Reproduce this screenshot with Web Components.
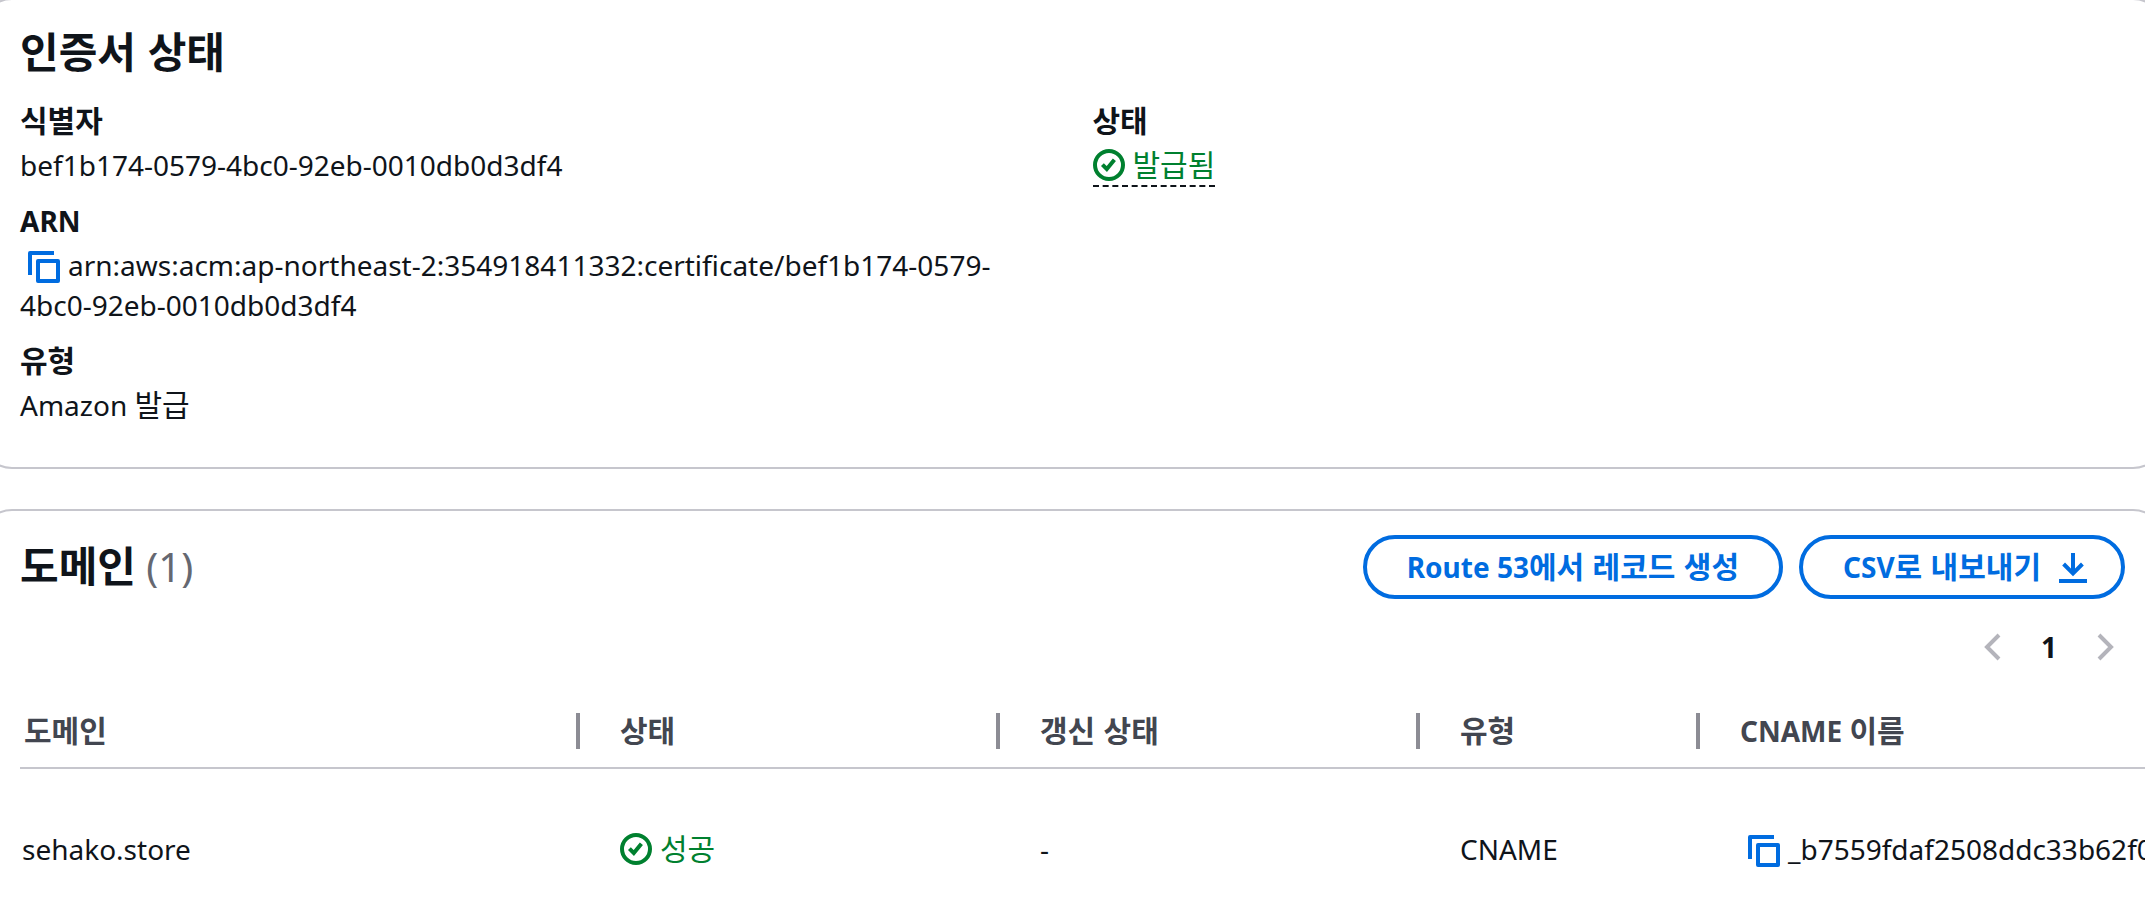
<!DOCTYPE html>
<html lang="ko">
<head>
<meta charset="utf-8">
<title>인증서 상태</title>
<style>
  html { overflow-x: hidden; }
  body {
    margin: 0;
    background: #fff;
    color: #0f141a;
    font: 28px/40px "Noto Sans", "Noto Sans CJK KR", sans-serif;
  }
</style>
</head>
<body>
<certificate-page></certificate-page>

<template id="t-icon">
  <style>
    :host { display: inline-block; width: 32px; height: 32px; flex: none; }
    svg { display: block; width: 100%; height: 100%; fill: none; stroke: currentColor; stroke-width: 2; overflow: visible; }
  </style>
</template>

<template id="t-ko"><style>:host { font-size: var(--ko-size, 30px); font-family: "Noto Sans CJK KR", sans-serif; line-height: 1; }</style><slot></slot></template>

<template id="t-card">
  <style>
    :host { display: block; box-sizing: border-box; margin: 0 -20px; border: 2px solid #c6c6cd; border-radius: 32px; background: #fff; padding: 24px 38px 42px; }
  </style>
  <slot></slot>
</template>

<template id="t-title">
  <style>
    :host { display: block; --ko-size: 42px; }
    h2 { margin: 0; font-size: 40px; line-height: 48px; font-weight: 700; }
    ::slotted(span) { font-weight: 400; color: #656871; }
  </style>
  <h2><slot></slot></h2>
</template>

<template id="t-field">
  <style>
    :host { display: flex; flex-direction: column; gap: 4px; }
    .label { font-weight: 700; height: 40px; }
    .value { min-height: 40px; }
  </style>
  <div class="label"><slot name="label"></slot></div>
  <div class="value"><slot></slot></div>
</template>

<template id="t-copy"><style>
    :host { display: inline; }
    button { display: inline-block; vertical-align: -7px; width: 32px; height: 32px; margin: 0 8px; padding: 0; border: 0; background: none; color: #006ce0; cursor: pointer; }
    ui-icon { display: block; }
  </style><button type="button" aria-label="복사"><ui-icon name="copy"></ui-icon></button></template>

<template id="t-status">
  <style>
    :host { display: inline-flex; align-items: center; gap: 8px; height: 40px; color: #00802f; vertical-align: top; }
    :host([popover-trigger]) { border-bottom: 2px dashed #0f141a; }
    ::slotted(*) { margin-bottom: 4px; }
  </style>
  <ui-icon name="success"></ui-icon><slot></slot>
</template>

<template id="t-button">
  <style>
    :host { display: block; }
    button { display: flex; align-items: center; gap: 16px; height: 64px; padding: 0 40px; border: 4px solid #006ce0; border-radius: 32px; background: #fff; color: #006ce0; font: inherit; font-weight: 700; white-space: nowrap; cursor: pointer; }
    :host([with-icon]) button { padding-right: 32px; }
  </style>
  <button type="button"><span><slot></slot></span><slot name="icon"></slot></button>
</template>

<template id="t-pagination">
  <style>
    :host { display: block; }
    nav { display: flex; justify-content: flex-end; align-items: center; padding-right: 4px; height: 40px; }
    button { width: 32px; height: 32px; padding: 0; border: 0; background: none; color: #b4b4bb; font: inherit; }
    button.page { width: 80px; height: 40px; color: #0f141a; font-weight: 700; }
    ui-icon { display: block; }
  </style>
  <nav aria-label="페이지">
    <button type="button" disabled aria-label="이전"><ui-icon name="left"></ui-icon></button>
    <button type="button" class="page" aria-current="page">1</button>
    <button type="button" disabled aria-label="다음"><ui-icon name="right"></ui-icon></button>
  </nav>
</template>

<template id="t-table">
  <style>
    :host { display: block; margin-right: -40px; overflow-x: auto; scrollbar-width: none; }
    table { width: 2400px; table-layout: fixed; border-collapse: separate; border-spacing: 0; }
    th, td { text-align: left; padding: 0 40px; white-space: nowrap; }
    th { height: 72px; border-bottom: 2px solid #c6c6cd; color: #424650; font-weight: 700; }
    td { height: 160px; }
    th:first-child { padding-left: 4px; }
    td:first-child { padding-left: 2px; }
    .head { display: flex; align-items: center; height: 36px; margin-right: -40px; border-right: 4px solid #8c8c94; }
    th:last-child .head { border: 0; }
    .head > div { line-height: 36px; }
  </style>
  <table>
    <colgroup><col style="width:560px"><col style="width:420px"><col style="width:420px"><col style="width:280px"><col></colgroup>
    <thead><tr>
      <th scope="col"><div class="head"><div><ko-text>도메인</ko-text></div></div></th>
      <th scope="col"><div class="head"><div><ko-text>상태</ko-text></div></div></th>
      <th scope="col"><div class="head"><div><ko-text>갱신 상태</ko-text></div></div></th>
      <th scope="col"><div class="head"><div><ko-text>유형</ko-text></div></div></th>
      <th scope="col"><div class="head"><div>CNAME <ko-text>이름</ko-text></div></div></th>
    </tr></thead>
    <tbody><tr>
      <td>sehako.store</td>
      <td><status-indicator><ko-text>성공</ko-text></status-indicator></td>
      <td>-</td>
      <td>CNAME</td>
      <td><copy-button></copy-button>_b7559fdaf2508ddc33b62f0</td>
    </tr></tbody>
  </table>
</template>

<template id="t-page">
  <style>
    :host { display: block; overflow: hidden; }
    main { display: flex; flex-direction: column; gap: 40px; margin-top: -2px; }
    .details { padding-top: 29px; }
    .columns { display: grid; grid-template-columns: 1fr 1fr; gap: 40px; margin-top: 24px; }
    .stack { display: flex; flex-direction: column; gap: 16px; min-width: 0; }
    .domains { border-bottom-width: 0; padding-bottom: 0; }
    .header { display: flex; align-items: center; justify-content: space-between; margin-bottom: 28px; }
    .actions { display: flex; gap: 16px; }
    page-controls { margin-bottom: 28px; }
  </style>
  <main>
    <ui-card class="details">
      <card-title><ko-text>인증서 상태</ko-text></card-title>
      <div class="columns">
        <div class="stack">
          <key-value><ko-text slot="label">식별자</ko-text>bef1b174-0579-4bc0-92eb-0010db0d3df4</key-value>
          <key-value><span slot="label">ARN</span><copy-button></copy-button>arn:aws:acm:ap-northeast-2:354918411332:certificate/bef1b174-0579-4bc0-92eb-0010db0d3df4</key-value>
          <key-value><ko-text slot="label">유형</ko-text>Amazon <ko-text>발급</ko-text></key-value>
        </div>
        <div class="stack">
          <key-value><ko-text slot="label">상태</ko-text><status-indicator popover-trigger><ko-text>발급됨</ko-text></status-indicator></key-value>
        </div>
      </div>
    </ui-card>
    <ui-card class="domains">
      <div class="header">
        <card-title><ko-text>도메인</ko-text> <span>(1)</span></card-title>
        <div class="actions">
          <ui-button>Route 53<ko-text>에서 레코드 생성</ko-text></ui-button>
          <ui-button with-icon>CSV<ko-text>로 내보내기</ko-text><ui-icon slot="icon" name="download"></ui-icon></ui-button>
        </div>
      </div>
      <page-controls></page-controls>
      <domain-table></domain-table>
    </ui-card>
  </main>
</template>

<script>
  const define = (name, templateId) => customElements.define(name, class extends HTMLElement {
    constructor() {
      super();
      this.attachShadow({ mode: "open" }).append(document.getElementById(templateId).content.cloneNode(true));
    }
  });

  const ICONS = {
    copy: '<g stroke-linejoin="round"><path d="M15 5H5v10h10V5Z"/><path d="M13 1H1v11"/></g>',
    success: '<circle cx="8" cy="8" r="7"/><path d="m4.7 7.8 2.2 2.2 3.8-4.6"/>',
    download: '<path d="M8 1v10M3.3 6.5 8 11.2l4.7-4.7M1 15h14"/>',
    left: '<path d="M11 2 5 8l6 6"/>',
    right: '<path d="m5 2 6 6-6 6"/>'
  };

  customElements.define("ui-icon", class extends HTMLElement {
    connectedCallback() {
      if (this.shadowRoot) return;
      const root = this.attachShadow({ mode: "open" });
      root.append(document.getElementById("t-icon").content.cloneNode(true));
      root.innerHTML += `<svg viewBox="0 0 16 16" aria-hidden="true">${ICONS[this.getAttribute("name")]}</svg>`;
    }
  });

  define("ko-text", "t-ko");
  define("ui-card", "t-card");
  define("card-title", "t-title");
  define("key-value", "t-field");
  define("copy-button", "t-copy");
  define("status-indicator", "t-status");
  define("ui-button", "t-button");
  define("page-controls", "t-pagination");
  define("domain-table", "t-table");
  define("certificate-page", "t-page");
</script>
</body>
</html>
